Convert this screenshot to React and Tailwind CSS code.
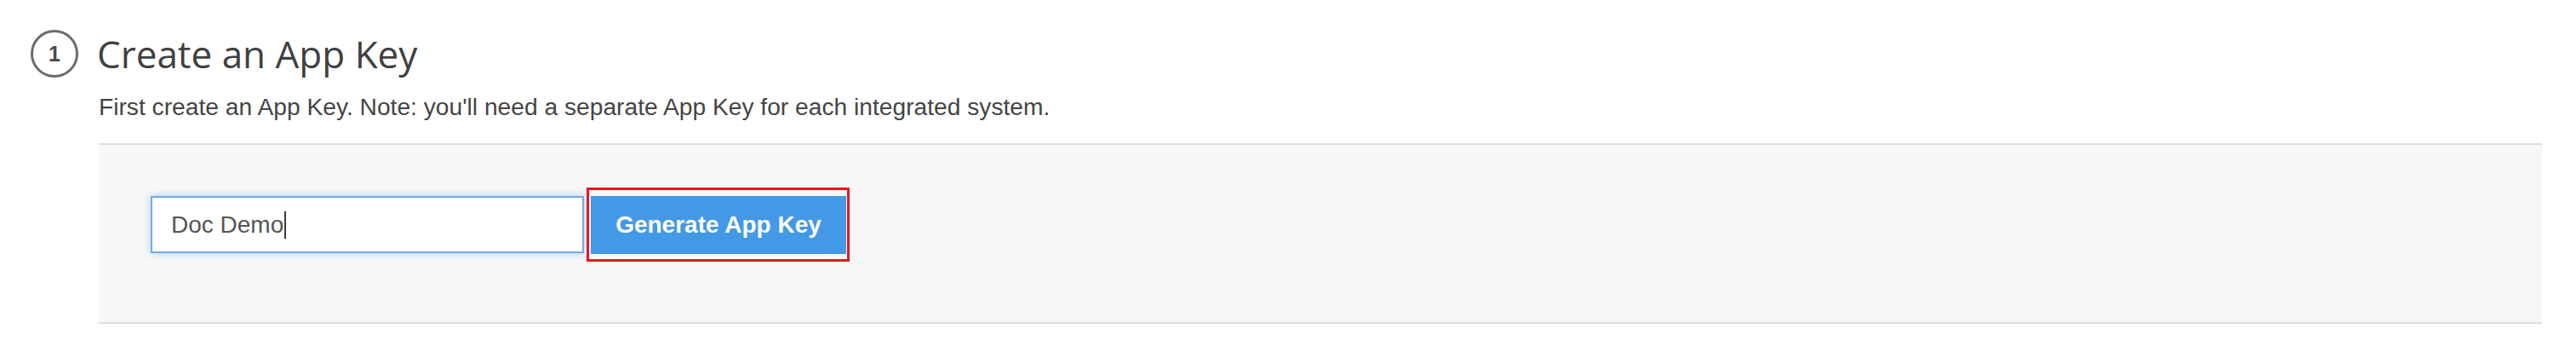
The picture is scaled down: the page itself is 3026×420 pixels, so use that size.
import React from 'react';

function StepBadge({ n }) {
  return (
    <div className="flex h-[56px] w-[56px] shrink-0 items-center justify-center rounded-full border-[3px] border-[#6b6b6b]">
      <span className="font-['Liberation_Sans',Arial,sans-serif] text-[25px] font-bold leading-none text-[#4a4a4a]">{n}</span>
    </div>
  );
}

function KeyInput({ value }) {
  return (
    <div className="flex h-[67px] w-[509px] items-center border-2 border-[#74aae2] bg-white pl-[22px] shadow-[0_0_9px_rgba(102,165,230,0.55)]">
      <span className="font-['Liberation_Sans',Arial,sans-serif] text-[28px] leading-none text-[#555555]">{value}</span>
      <span className="ml-[1px] h-[32px] w-[2px] bg-[#3a3a3a]" />
    </div>
  );
}

export default function App() {
  return (
    <div className="min-h-[420px] bg-white pl-[36px] pr-[40px] pt-[34px]">
      <div className="flex items-center gap-[22px]">
        <StepBadge n={1} />
        <h2 className="font-['Open_Sans',sans-serif] text-[44px] font-normal leading-[58px] text-[#404040]">Create an App Key</h2>
      </div>
      <div className="ml-[80px]">
        <p className="mt-[17px] font-['Liberation_Sans',Arial,sans-serif] text-[28.2px] leading-[32px] text-[#454545]">
          First create an App Key. Note: you'll need a separate App Key for each integrated system.
        </p>
        <div className="mt-[27px] border-y-2 border-[#dedede] bg-[#f8f8f8] pb-[71px] pl-[61px] pt-[50px]">
          <div className="flex items-center gap-[3px]">
            <KeyInput value="Doc Demo" />
            <div className="border-[3px] border-[#e8171f] pb-[6px] pl-[2px] pr-[1px] pt-[7px]">
              <button
                type="button"
                className="flex h-[68px] w-[300px] items-center justify-center bg-[#4499e6] font-['Liberation_Sans',Arial,sans-serif] text-[28px] font-bold text-white"
              >
                Generate App Key
              </button>
            </div>
          </div>
        </div>
      </div>
    </div>
  );
}
